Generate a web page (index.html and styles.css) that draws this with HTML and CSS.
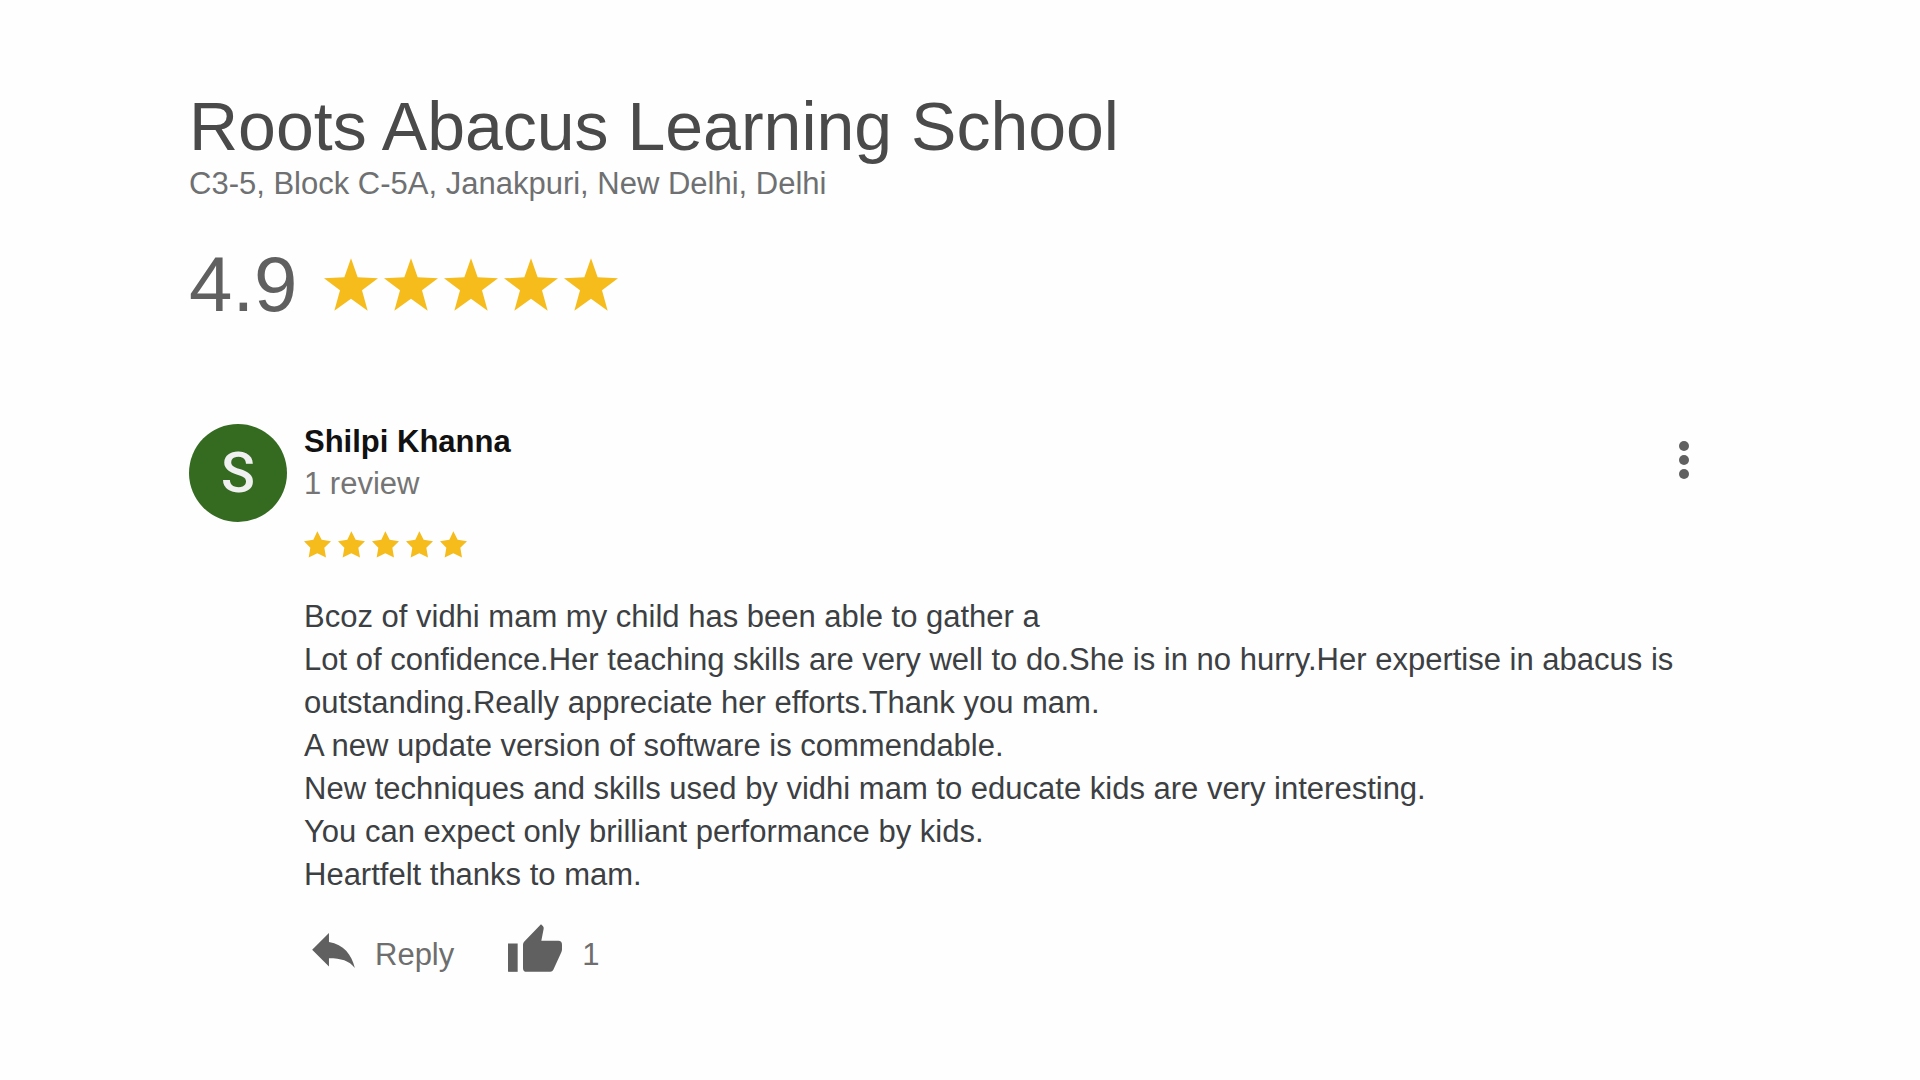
FILE: index.html
```html
<!DOCTYPE html>
<html lang="en">
<head>
  <meta charset="UTF-8">
  <title>Roots Abacus Learning School - Reviews</title>
  <link rel="stylesheet" href="styles.css">
</head>
<body>

<!-- star shapes used by both rating rows -->
<svg class="symbols" aria-hidden="true">
  <symbol id="star" viewBox="0 0 162 157">
    <path d="M81 0L101 57L162 60L114 96L131 157L81 121L31 157L48 96L0 60L61 57Z"/>
  </symbol>
  <symbol id="starSmall" viewBox="0 0 81 80">
    <path d="M40 0L53 26L81 30L61 50L66 79L40 66L14 79L19 50L0 30L28 26Z"/>
  </symbol>
</svg>

<main class="container">
  <header>
    <h1>Roots Abacus Learning School</h1>
    <p class="address">C3-5, Block C-5A, Janakpuri, New Delhi, Delhi</p>
    <div class="rating">
      <span class="score">4.9</span>
      <div class="stars" role="img" aria-label="Rated 4.9 out of 5">
        <svg><use href="#star"/></svg>
        <svg><use href="#star"/></svg>
        <svg><use href="#star"/></svg>
        <svg><use href="#star"/></svg>
        <svg><use href="#star"/></svg>
      </div>
    </div>
  </header>

  <article class="review">
    <div class="avatar">S</div>

    <div class="content">
      <div class="top">
        <div>
          <h2>Shilpi Khanna</h2>
          <p class="count">1 review</p>
        </div>
        <button class="menu" type="button" aria-label="More options">
          <svg viewBox="0 0 12 40">
            <circle cx="6" cy="6" r="5"/>
            <circle cx="6" cy="20" r="5"/>
            <circle cx="6" cy="34" r="5"/>
          </svg>
        </button>
      </div>

      <div class="stars small" role="img" aria-label="5 out of 5">
        <svg><use href="#starSmall"/></svg>
        <svg><use href="#starSmall"/></svg>
        <svg><use href="#starSmall"/></svg>
        <svg><use href="#starSmall"/></svg>
        <svg><use href="#starSmall"/></svg>
      </div>

      <p class="text">
        Bcoz of vidhi mam my child has been able to gather a<br>
        Lot of confidence.Her teaching skills are very well to do.She is in no hurry.Her expertise in abacus is outstanding.Really appreciate her efforts.Thank you mam.<br>
        A new update version of software is commendable.<br>
        New techniques and skills used by vidhi mam to educate kids are very interesting.<br>
        You can expect only brilliant performance by kids.<br>
        Heartfelt thanks to mam.
      </p>

      <div class="actions">
        <button type="button">
          <svg class="reply-icon" viewBox="0 0 127 116">
            <path d="M0 50L50 0V27C94 34 117 64 127 104C110 82 86 75 50 75V100Z"/>
          </svg>
          Reply
        </button>
        <button type="button" aria-label="Like, 1">
          <svg class="like-icon" viewBox="0 0 162 143">
            <path d="M0 58H29V143H0Z"/>
            <path d="M45 62Q45 56 49 52L99 0L105 6Q108 9 107 14L100 50H151Q162 50 162 62V75Q162 79 160 84L136 137Q133 143 127 143H56Q45 143 45 132Z"/>
          </svg>
          1
        </button>
      </div>
    </div>
  </article>
</main>

</body>
</html>
```

FILE: styles.css
```css
* {
  box-sizing: border-box;
  margin: 0;
  padding: 0;
}

body {
  font-family: "Liberation Sans", Arial, sans-serif;
  font-size: 31px;
  background: #fefefe;
  color: #3c4043;
}

.symbols {
  position: absolute;
  width: 0;
  height: 0;
}

.container {
  padding: 88px 230px 88px 189px;
}

h1 {
  font-size: 68px;
  font-weight: normal;
  line-height: 76px;
  color: #4a4a4a;
}

.address {
  line-height: 40px;
  color: #6e7072;
}

.rating {
  display: flex;
  align-items: center;
  gap: 27px;
  margin-top: 36px;
}

.score {
  font-size: 78px;
  line-height: 88px;
  color: #606060;
}

.stars {
  display: flex;
  gap: 6px;
  fill: #f5bc1c;
}

.stars svg {
  width: 54px;
  height: 53px;
}

.stars.small {
  gap: 7px;
  margin-top: 29px;
}

.stars.small svg {
  width: 27px;
  height: 27px;
}

.review {
  display: flex;
  gap: 17px;
  margin-top: 96px;
}

.avatar {
  flex: none;
  width: 98px;
  height: 98px;
  border-radius: 50%;
  background: #346b21;
  color: #f0f0f0;
  font-family: Roboto, sans-serif;
  font-size: 56px;
  font-weight: 500;
  line-height: 98px;
  text-align: center;
}

.content {
  flex: 1;
}

.top {
  display: flex;
  justify-content: space-between;
  align-items: flex-start;
}

h2 {
  font-size: 31px;
  line-height: 36px;
  color: #111;
}

.count {
  margin-top: 6px;
  line-height: 36px;
  color: #757575;
}

button {
  display: flex;
  border: none;
  background: none;
  font: inherit;
  color: #6e6e6e;
  fill: #606060;
  cursor: pointer;
}

.menu {
  padding-top: 16px;
}

.menu svg {
  width: 12px;
  height: 40px;
}

.text {
  margin-top: 37px;
  line-height: 43px;
}

.actions {
  display: flex;
  align-items: flex-end;
  gap: 54px;
  margin-top: 28px;
  padding-left: 8px;
}

.actions button {
  align-items: flex-end;
  gap: 20px;
  line-height: 35px;
}

.reply-icon {
  width: 43px;
  height: 39px;
}

.like-icon {
  width: 54px;
  height: 48px;
}
```
